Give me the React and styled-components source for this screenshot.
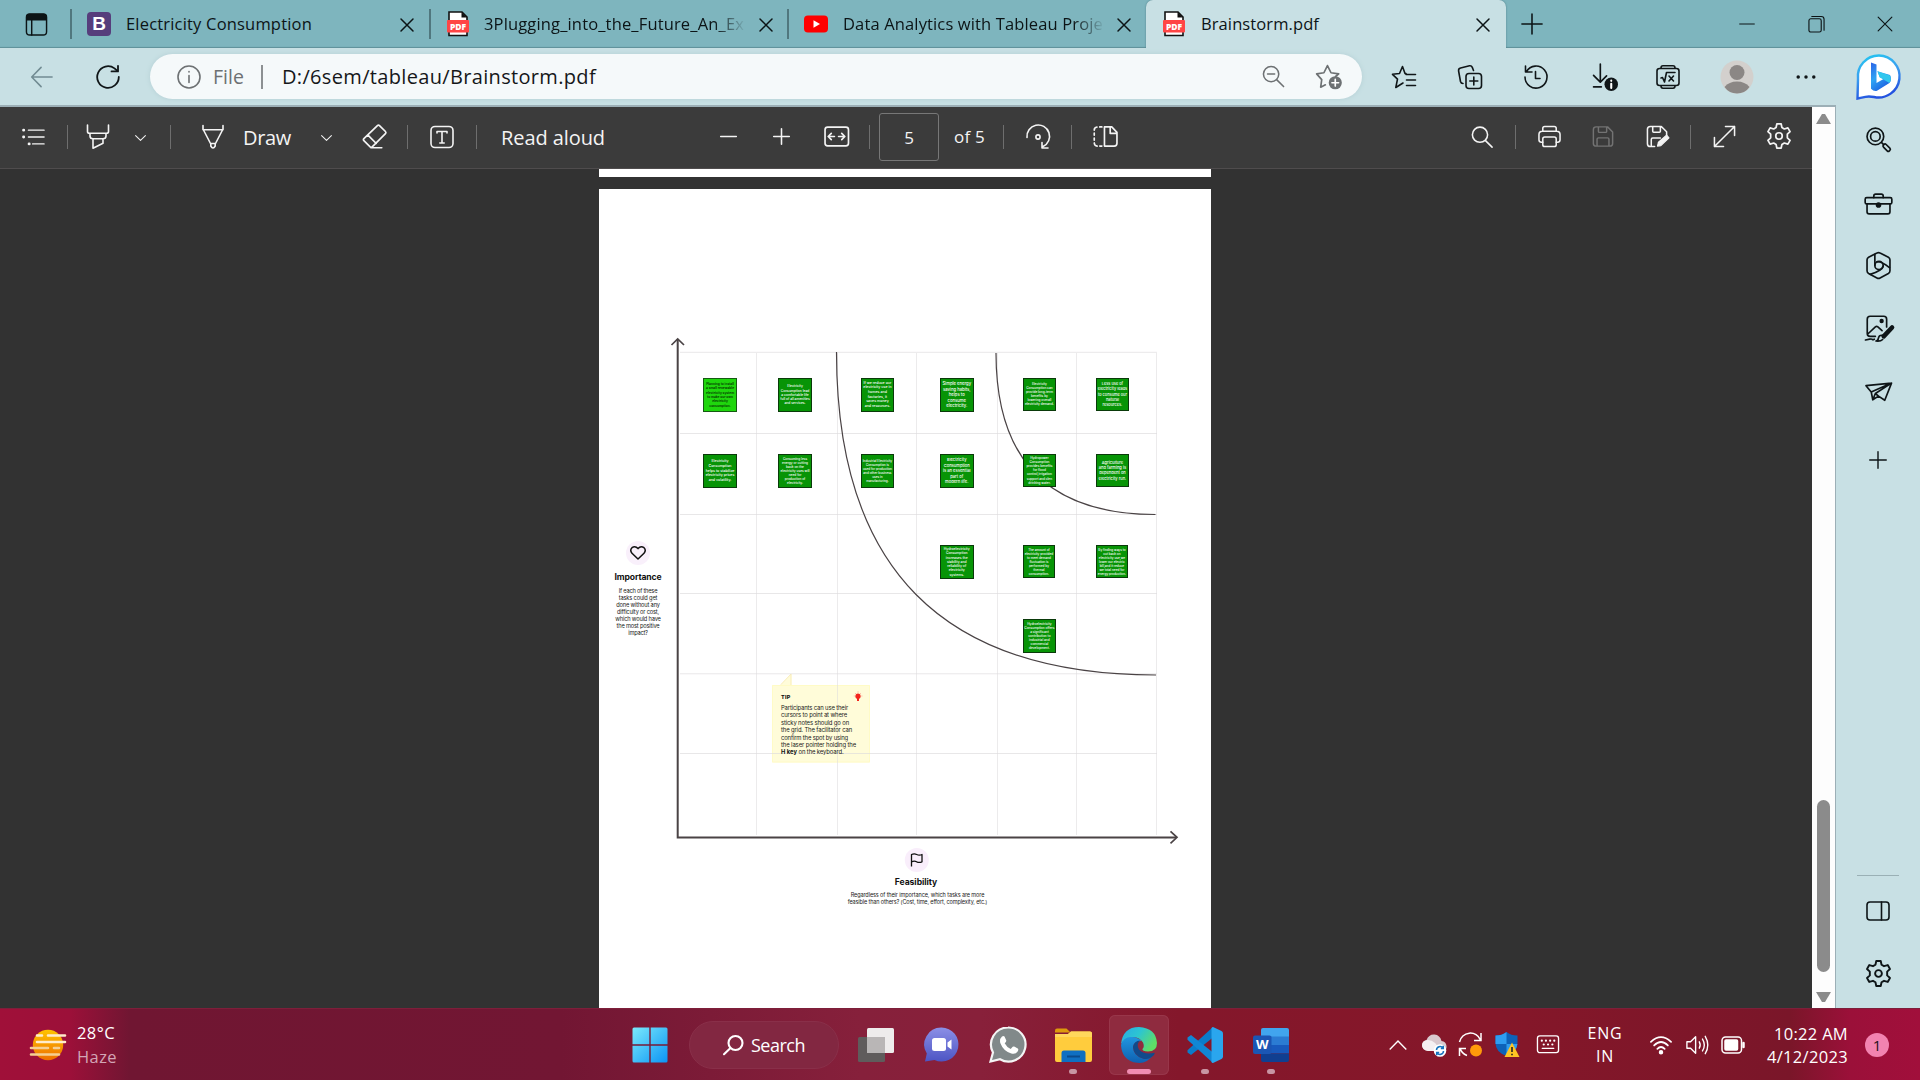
import React, { useLayoutEffect, useRef, useState } from "react";
import styled, { createGlobalStyle } from "styled-components";

const Global = createGlobalStyle`
  * { box-sizing: border-box; }
  body { margin: 0; overflow: hidden; background: #323232; font-family: "Open Sans", "Noto Sans", sans-serif; }
`;

const Screen = styled.div`
  width: 1920px;
  height: 1080px;
  display: flex;
  flex-direction: column;
  overflow: hidden;
`;

/* ---------- shared parts ---------- */
const Svg = styled.svg`
  flex: none;
  display: block;
  width: ${(p) => p.$w}px;
  height: ${(p) => p.$h}px;
  margin-left: ${(p) => p.$ml || 0}px;
  margin-top: ${(p) => p.$mt || 0}px;
  color: ${(p) => p.$c || "inherit"};
  overflow: visible;
`;

function Icon({ name, w = 24, h = 24, ml, mt, c, sw = 1.6, vb = "0 0 24 24" }) {
  return (
    <Svg $w={w} $h={h} $ml={ml} $mt={mt} $c={c} viewBox={vb} fill="none" stroke="currentColor"
      strokeWidth={sw} strokeLinecap="round" strokeLinejoin="round">
      {icons[name]}
    </Svg>
  );
}

const Label = styled.span`
  flex: none;
  display: block;
  width: ${(p) => p.$w}px;
  margin-left: ${(p) => p.$ml || 0}px;
  margin-top: ${(p) => p.$mt || 0}px;
  font-size: ${(p) => p.$size || 16}px;
  line-height: ${(p) => p.$lh || 24}px;
  font-weight: ${(p) => p.$weight || 400};
  color: ${(p) => p.$c || "inherit"};
  white-space: nowrap;
`;

function Text({ children, w, ml, mt, size, lh, c, weight }) {
  const ref = useRef(null);
  const [spacing, setSpacing] = useState(0);
  useLayoutEffect(() => {
    const natural = ref.current.getBoundingClientRect().width;
    setSpacing((w - natural) / String(children).length);
  }, []);
  return (
    <Label $w={w} $ml={ml} $mt={mt} $size={size} $lh={lh} $c={c} $weight={weight}>
      <span ref={ref} style={{ letterSpacing: `${spacing}px` }}>{children}</span>
    </Label>
  );
}

const Rule = styled.i`
  flex: none;
  width: ${(p) => p.$w || 1}px;
  height: ${(p) => p.$h || 24}px;
  margin-left: ${(p) => p.$ml || 0}px;
  background: ${(p) => p.$c || "#6e6e6e"};
`;

const gearPath = "M10 .9h4l.7 3.3 2.2 1.3 3.3-1 2 3.500-2.500 2.300v3.400l2.500 2.300-2 3.500-3.300-1-2.200 1.300-.7 3.300h-4l-.7-3.300-2.200-1.300-3.300 1-2-3.500 2.500-2.300v-3.400L1.800 8l2-3.500 3.300 1 2.200-1.300z";

const icons = {
  tabs: (<><rect x="1.500" y="1" width="21" height="22" rx="3.500" /><path d="M2 7V4q0-2.500 2.500-2.500h15Q22 1.500 22 4v3z" fill="currentColor" /><path d="M7 7v16" /></>),
  close: <path d="M1 1l12 12M13 1L1 13" />,
  plus: <path d="M12 1v22M1 12h22" />,
  minus: <path d="M1 12h22" />,
  restore: (<><rect x="1" y="4" width="13" height="14" rx="2" /><path d="M4 1.500h10q3 0 3 3V16" /></>),
  back: <path d="M23 12H1.500M11 1.500L.8 12 11 22.500" />,
  reload: (<><path d="M22.800 12A10.800 10.800 0 1 1 18.500 3.400L21.500 6" /><path d="M22 .8V6.400h-6.500" /></>),
  info: (<><circle cx="12" cy="12" r="11" /><path d="M12 10.500v7M12 6.500v.4" /></>),
  zoomout: (<><circle cx="9.500" cy="9.500" r="8" /><path d="M15.500 15.500l7 7M5.800 9.500h7.400" /></>),
  starAdd: (<><path d="M9 20l-4.500 2.300 1-7.300L.6 9.500l7-1.100L11 1.500l3.400 6.900 7.400 1.100-3 2.500" /><circle cx="18.500" cy="18" r="6.300" fill="currentColor" stroke="none" /><path d="M18.500 14.800v6.400M15.300 18h6.400" stroke="#fff" /></>),
  favorites: (<><path d="M14 8.500h-1L10.500 1.500 7.500 8.500l-7 .8 5 4.800-1.700 8.400L11 18M14 9.500h9.500M14.500 15h9M14.500 20.500h9" /></>),
  collections: (<><rect x="8" y="8.500" width="15.500" height="15" rx="3" /><path d="M15.800 12v8M11.800 16h8M5 18.500q-2 0-2.500-2L.6 6q-.4-2.400 2-3L11.500.8q2-.3 2.800 1.600L15.500 5.500" /></>),
  history: (<><path d="M2.500 6.500A11 11 0 1 1 1 12M1.500 1v6h6.500M11.500 6.500v7H16" /></>),
  download: (<><path d="M8 0v17M1.500 11L8 17.500l6-6M1.500 22H9" /><circle cx="18.500" cy="19.500" r="6.500" fill="currentColor" stroke="none" /><path d="M18.500 19v4M18.500 16v.2" stroke="#fff" strokeWidth="2" /></>),
  math: (<><rect x="1" y="3.500" width="22" height="17" rx="2.500" /><path d="M5 3Q5 .8 7 .8h10Q19 .8 19 3M5 21q0 2.200 2 2.200h10q2 0 2-2.200M5 13l1.500-.5L8.500 17l2-9.500H19M13 11l4.500 5M17.500 11L13 16" /></>),
  dots: (<g fill="currentColor" stroke="none"><circle cx="3.500" cy="12" r="1.900" /><circle cx="12" cy="12" r="1.900" /><circle cx="20.500" cy="12" r="1.900" /></g>),
  list: (<><path d="M6.500 4.500h17M6.500 12h17M11 19.500h12.500" /><path d="M1.200 4.500h.1M1.200 12h.1M7.200 19.500h.1" strokeWidth="3.200" /></>),
  marker: (<><path d="M1.500 0v6.500q0 1.800 2 1.800h17q2 0 2-1.800V0M4 8.500v2.500q0 2.800 3 2.800h10q3 0 3-2.800V8.500M7 14v9.200l10-5V14" /></>),
  chevron: <path d="M1 1l9 9 9-9" />,
  pen: (<><path d="M2 .5v4.200h20V.5M2.500 5l7 13.500h5L21.500 5M9.800 18.500v2.500q2.200 4 4.400 0v-2.500" /></>),
  eraser: (<><path d="M14.800 1.500q1-1 2 0l5.700 5.700q1 1 0 2L9.800 22q-1 1-2 0l-6-6q-1-1 0-2zM5.500 10.500l8.200 8.200M8.500 22.800H19" /></>),
  textbox: (<><rect x="1" y="1.500" width="22" height="21" rx="4" /><path d="M7 8V6.500h10V8M12 6.500v11.500M9.800 18h4.400" /></>),
  fit: (<><rect x="1" y="3" width="22.500" height="18" rx="2.500" /><path d="M10 12H4.500M7 9l-3 3 3 3M14 12h5.500M17 9l3 3-3 3" /></>),
  rotate: (<><path d="M1 13A11.300 11.300 0 1 1 17 22M22 23.500h-6v-5.500" /><circle cx="12" cy="12.500" r="2.100" /></>),
  pageview: (<><path d="M3.800 2.900Q1.200 3.200 1.200 5.800M6.500 2.800h2M1.200 8.800v2M1.200 13.500v2M1.200 18.200q.2 2.800 2.800 3M6.500 21.200h2" /><path d="M11 2.800h7L23 8v10.500q0 2.700-2.700 2.700H11zM16.500 3.500V9h6" /></>),
  search: (<><circle cx="9.800" cy="9.500" r="8.300" /><path d="M15.800 16l7.200 7" /></>),
  print: (<><path d="M5 6V3.500Q5 1.500 7 1.500h10q2 0 2 2V6M5 18H3.500Q1 18 1 15.500V10q0-3.500 3.500-3.500h15Q23 6.500 23 10v5.500q0 2.500-2.500 2.500H19" /><rect x="5" y="12.500" width="14" height="10" rx="2" /></>),
  save: (<><path d="M4.500 1.500H17L22.500 7v12.500q0 3-3 3h-15q-3 0-3-3v-15q0-3 3-3zM7 1.800v4.700q0 1 1 1h7q1 0 1-1V1.800M5.500 22v-7q0-1.500 1.500-1.500h10q1.500 0 1.500 1.500v7" /></>),
  saveas: (<><path d="M9 22.500H4.500q-3 0-3-3v-15q0-3 3-3H16L21.500 7v4M7 1.800v4.700q0 1 1 1h6q1 0 1-1V1.800M5.500 22v-7q0-1.500 1.500-1.500h8" /><path d="M12 22l1-4 8.500-7.500 2.500 3-8.500 8z" fill="currentColor" strokeWidth="1.200" /></>),
  expand: <path d="M1.500 22.500l21-21M13 1.500h9.500V11M1.500 13v9.500H11" />,
  gear: (<><path d={gearPath} /><circle cx="12" cy="12" r="3" /></>),
  sideSearch: (<><circle cx="9" cy="9" r="8" /><circle cx="9" cy="9" r="4.600" /><path d="M15 15l2 2" /><rect x="-1.800" y="-3.800" width="3.600" height="8" rx="1.500" transform="translate(19.700 19.700) rotate(-45)" /></>),
  toolbox: (<><rect x="-.8" y="4.500" width="25.600" height="6" rx="1.500" /><path d="M1 10.500V18q0 2 2 2h18q2 0 2-2v-7.500M7.500 4.500V2.800Q7.500 1 9.300 1h5.400q1.800 0 1.800 1.800v1.700" /><circle cx="12" cy="11.500" r="1.900" fill="currentColor" /></>),
  hex: (<><path d="M10.500 0q1.500-.8 3 0l8 4q1.500.9 1.500 2.600v10.500q0 1.700-1.500 2.600l-8 4.300q-1.500.8-3 0l-8-4.300Q1 18.800 1 17.100V6.600Q1 4.900 2.500 4z" /><circle cx="12.500" cy="12" r="4" /><path d="M8.500 12V1.200M10.500 8.500q4-.8 12 5.500M16.500 12.500q-1 4.500-12.500 8" /></>),
  image: (<><path d="M9 20.500H4q-2.800 0-2.800-2.800V4Q1.200 1.200 4 1.200h13Q19.800 1.200 19.800 4v7.500M2 18l7-6.500q1.200-1 2.400 0l4 3.500" /><circle cx="15" cy="5.800" r="1.300" fill="currentColor" /><path d="M25 12L17 20.500" strokeWidth="4.400" /><path d="M16 19.500q-3.500-.5-4 2.500-.5 3-2.500 3 4.500.6 6.500-1.500M-.5 24l4-.8q2-.4 2.500.2t2-.2" /></>),
  plane: <path d="M0 4.500L24.500 2 18 18.500l-6-4-5.500 3.500L5 10.500zM5 10.500L24.500 2 9 12l-2.500 6M9 12l3 2.500" />,
  panel: (<><rect x="1" y="3" width="22" height="18" rx="3" /><path d="M15.500 3v18" /></>),
  keyboard: (<><rect x="1" y="3" width="22" height="17.500" rx="2.500" /><path d="M6 16h12" /><path d="M5.500 8h.1M9.800 8h.1M14.200 8h.1M18.500 8h.1M7.500 12h.1M12 12h.1M16.500 12h.1" strokeWidth="2.200" /></>),
  wifi: (<><path d="M1 8.500Q12-1.500 23 8.500M4.500 12.500q7.500-7.500 15 0M8 16.200q4-4 8 0" /><circle cx="12" cy="20" r="1.500" fill="currentColor" /></>),
  volume: (<><path d="M1 8.500h4L10.500 3v18L5 15.500H1zM14.500 8.500q2 3.500 0 7M18 5.500q4 6.500 0 13M21 2.500q5.500 9.500 0 19" /></>),
  battery: (<><rect x="1" y="4" width="19.500" height="16" rx="3.500" /><rect x="4" y="7" width="12.500" height="10" rx="1" fill="currentColor" /><path d="M22.500 10v4" strokeWidth="2.500" /></>),
};

/* ---------- tab strip ---------- */
const TabStrip = styled.header`
  height: 48px;
  flex: none;
  display: flex;
  align-items: center;
  background: #7eb5be;
  box-shadow: inset 0 -2px 1px -1px #5f8f98;
  color: #0c1416;
`;
const TabsMenu = styled.div`
  width: 70px;
  padding-left: 25px;
`;
const Tab = styled.div`
  width: ${(p) => p.$w}px;
  height: 48px;
  flex: none;
  display: flex;
  align-items: center;
  padding-left: ${(p) => (p.$active ? 16 : 15)}px;
  ${(p) => p.$active && "background: #c8e0e4; border-radius: 7px 7px 0 0; box-shadow: 0 0 2px #4c7a84; clip-path: inset(0 -3px 0 -3px);"}
`;
const TabTitle = styled.div`
  width: 262px;
  margin-left: ${(p) => p.$ml}px;
  overflow: hidden;
  ${(p) => p.$fade && "mask-image: linear-gradient(90deg, #000 88%, transparent 100%);"}
`;

const BootstrapMark = styled.div`
  width: 24px;
  height: 24px;
  border-radius: 4px;
  background: #563d7c;
  color: #fff;
  font: 700 19px/24px "Liberation Sans", sans-serif;
  text-align: center;
`;
const PdfMark = () => (
  <Svg $w={24} $h={26} viewBox="0 0 24 26">
    <path d="M3 1h13l5 5v18.500H3z" fill="#fff" stroke="#111" strokeWidth="1.600" />
    <path d="M15.500 1v5.500H21z" fill="#111" />
    <rect x="1" y="9" width="22" height="12.500" rx="1" fill="#ff4545" />
    <text x="12" y="18.500" textAnchor="middle" fontFamily="Open Sans, sans-serif" fontWeight="800" fontSize="8.500" fill="#fff">PDF</text>
  </Svg>
);
const YouTubeMark = () => (
  <Svg $w={24} $h={24} viewBox="0 0 24 24">
    <rect y="3.500" width="24" height="17" rx="4" fill="#f00" />
    <path d="M9.500 8.300v7.400L16 12z" fill="#fff" />
  </Svg>
);

/* ---------- address bar ---------- */
const AddressRow = styled.div`
  height: 57px;
  flex: none;
  display: flex;
  align-items: center;
  background: #c8e0e4;
  color: #101618;
`;
const AddressPill = styled.div`
  width: 1212px;
  height: 45px;
  margin-left: 30px;
  flex: none;
  display: flex;
  align-items: center;
  border-radius: 23px;
  background: #f5f9fa;
  box-shadow: 0 0 5px #b4cfd4;
  color: #6d7173;
`;

const BingMark = () => (
  <Svg $w={45} $h={46} $ml={39} viewBox="0 0 45 46">
    <defs>
      <linearGradient id="bingRing" x1="0" y1="0" x2=".3" y2="1"><stop offset="0" stopColor="#22c8f0" /><stop offset=".5" stopColor="#3b9ff0" /><stop offset="1" stopColor="#2353e0" /></linearGradient>
      <linearGradient id="bingB" x1="0" y1="0" x2=".6" y2="1"><stop offset="0" stopColor="#2b62e6" /><stop offset=".5" stopColor="#2fa4f4" /><stop offset="1" stopColor="#1c5fe0" /></linearGradient>
    </defs>
    <path d="M23 1.500a21 21 0 1 1-5 41.500q-5-1-8.500-.2T1.500 44.500L2 25A21 21 0 0 1 23 1.500z" fill="#fff" stroke="url(#bingRing)" strokeWidth="2.400" />
    <path d="M15 8.500l5.500 2v18.500l7-4-3.800-1.700-2.300-6L34 21q2.200 4.500-.6 8L21 36.700q-3 1-6-2z" fill="url(#bingB)" />
    <path d="M21.500 17.300L34 21.400q2 4.500-.6 7.600l-9.700-5.700z" fill="#30c7ee" />
  </Svg>
);
const Avatar = () => (
  <Svg $w={34} $h={34} $ml={40} viewBox="0 0 34 34">
    <circle cx="17" cy="17" r="16.500" fill="#d3d0cd" />
    <circle cx="17" cy="12.500" r="7.500" fill="#8b8785" />
    <path d="M4.500 27Q9 21.500 17 21.500T29.500 27Q25 33.500 17 33.500T4.500 27z" fill="#8b8785" />
  </Svg>
);

/* ---------- body ---------- */
const Body = styled.div`
  height: 903px;
  flex: none;
  display: flex;
`;
const Viewer = styled.main`
  width: 1836px;
  display: flex;
  border-top: 2px solid #9cafb6;
  border-right: 1px solid #9cafb6;
`;
const Reader = styled.section`
  width: 1812px;
  display: flex;
  flex-direction: column;
`;
const PdfBar = styled.div`
  height: 62px;
  flex: none;
  display: flex;
  align-items: center;
  padding-bottom: 2px;
  background: #3b3b3b;
  border-bottom: 1px solid #4f4c4d;
  color: #f4f4f4;
`;
const PageBox = styled.div`
  width: 60px;
  height: 48px;
  margin-left: 9px;
  flex: none;
  border: 1px solid #777;
  border-radius: 3px;
  text-align: center;
  font-size: 17px;
  line-height: 47px;
`;
const Scroll = styled.div`
  width: 23px;
  display: flex;
  flex-direction: column;
  align-items: center;
  background: #fdfdfd;
`;
const Thumb = styled.div`
  width: 13px;
  height: 172px;
  margin-top: auto;
  margin-bottom: 20px;
  border-radius: 7px;
  background: #8b8b8b;
`;
const ScrollArrow = styled.i`
  width: 15px;
  height: 10px;
  margin: ${(p) => (p.$down ? "0 0 6px" : "7px 0 0")};
  background: #8b8b8b;
  clip-path: ${(p) => (p.$down ? "polygon(0 0,100% 0,60% 100%,40% 100%)" : "polygon(40% 0,60% 0,100% 100%,0 100%)")};
`;
const SidePane = styled.aside`
  width: 84px;
  display: flex;
  flex-direction: column;
  align-items: center;
  background: #c8e0e4;
  color: #0e1517;
`;
const PaneRule = styled.i`
  width: 42px;
  height: 1px;
  margin-top: auto;
  background: #9ab0b5;
`;

/* ---------- document ---------- */
const Canvas = styled.div`
  flex: 1;
  min-height: 0;
  display: flex;
  flex-direction: column;
  padding-left: 599px;
  background: #323232;
  overflow: hidden;
`;
const PreviousPage = styled.div`
  width: 612px;
  height: 8px;
  flex: none;
  background: #fff;
`;
const Page = styled.article`
  position: relative;
  width: 612px;
  height: 819px;
  margin-top: 12px;
  flex: none;
  background: #fff;
  font-family: Inter, "Open Sans", sans-serif;
  color: #202020;
`;
const Board = styled.svg`
  display: block;
  width: 612px;
  height: 819px;
`;
const Note = styled.div`
  position: absolute;
  left: ${(p) => p.$x - 599}px;
  top: ${(p) => p.$y - 189}px;
  width: ${(p) => p.$s || 33.5}px;
  height: ${(p) => p.$s || 33.5}px;
  display: flex;
  flex-direction: column;
  align-items: center;
  justify-content: center;
  border: 1px solid ${(p) => (p.$bright ? "#155a12" : "#0a3a0a")};
  background: ${(p) => (p.$bright ? "#1fd60d" : "#079406")};
  color: ${(p) => (p.$bright ? "#032d01" : "#fff")};
  font-size: ${(p) => p.$f}px;
  line-height: ${(p) => p.$lh}px;
  font-weight: ${(p) => (p.$bright ? 600 : 500)};
  white-space: nowrap;
`;
const Caption = styled.div`
  position: absolute;
  left: ${(p) => p.$x - 599}px;
  top: ${(p) => p.$y - 189}px;
  width: ${(p) => p.$w}px;
  display: flex;
  flex-direction: column;
  align-items: ${(p) => (p.$left ? "flex-start" : "center")};
  white-space: nowrap;
`;

const notes = [
  [703.3, 378.3, 3.25, 4.4, ["Planning to install", "a small renewable", "electricity system", "to make our own", "electricity", "consumption."], true],
  [778.3, 378.3, 3.3, 4.3, ["Electricity", "Consumption lead", "a comfortable life", "full of all amenities", "and services."]],
  [860.7, 378, 3.6, 4.7, ["If we reduce our", "electricity use in", "homes and", "factories, it", "saves money", "and resources."]],
  [940, 378, 4.2, 5.5, ["Simple energy", "saving habits,", "helps to", "consume", "electricity."]],
  [1022.7, 377.5, 3.15, 4.1, ["Electricity", "Consumption can", "provide long-term", "benefits by", "lowering overall", "electricity demand."]],
  [1095.7, 377.5, 3.9, 5.2, ["Less use of", "electricity leads", "to consume our", "natural", "resources."]],
  [703.3, 454.3, 3.6, 4.7, ["Electricity", "Consumption", "helps to stabilize", "electricity prices", "and volatility."]],
  [778.3, 454.3, 3.2, 4.1, ["Consuming less", "energy or cutting", "back on the", "electricity uses will", "need for", "production of", "electricity."]],
  [860.7, 454.3, 3.1, 4.1, ["Industrial Electricity", "Consumption is", "used for production", "and other business", "uses in", "manufacturing."]],
  [940, 454.3, 4.1, 5.5, ["Electricity", "Consumption", "is an essential", "part of", "modern life."]],
  [1022.7, 453.7, 3.15, 4.1, ["Hydropower", "Consumption", "provides benefits", "for flood", "control,irrigation", "support and clen", "drinking water."]],
  [1095.7, 453.7, 4, 5.4, ["Agriculture", "and farming is", "dependent on", "electricity run."]],
  [940, 545.3, 3.4, 4.3, ["Hydroelectricity", "Consumption", "increases the", "stability and", "reliability of", "electricity", "systems."]],
  [1022.7, 545.3, 3.1, 4, ["The amount of", "electricity provided", "to meet demand", "fluctuation is", "performed by", "thermal", "consumption."], false, 32.5],
  [1095.7, 545.3, 3.1, 4, ["By finding ways to", "cut back on", "electricity use,we", "lower our electric", "bill,and it reduce", "we total need for", "energy production."], false, 32.5],
  [1022.7, 619.2, 3.2, 4.1, ["Hydroelectricity", "Consumption offers", "a significant", "contribution to", "industrial and", "commercial", "development."]],
];

const importance = [["If each of these", 38.5], ["tasks could get", 38.5], ["done without any", 43.5], ["difficulty or cost,", 42], ["which would have", 45.5], ["the most positive", 43], ["impact?", 19.5]];
const tip = [["Participants can use their", 67], ["cursors to point at where", 66], ["sticky notes should go on", 68], ["the grid. The facilitator can", 71], ["confirm the spot by using", 67], ["the laser pointer holding the", 75]];
const TipLast = styled.div`
  display: flex;
  gap: 1.500px;
`;

const Whiteboard = () => (
  <Page>
    <Board viewBox="599 189 612 819" fill="none">
      <path d="M772 685h8l11.500-11.500V685H870v77.500h-98z" fill="#fffcd9" />
      <path d="M772.5 685.500h97v76.500h-97z" stroke="#fffbc6" strokeWidth="1" />
      <path d="M791 674v11M781 684.500l10-10.500" stroke="#f6e7ad" strokeWidth=".7" />
      <g stroke="#dcdadc" strokeWidth="1">
        {[352.3, 433.5, 514.5, 593.5, 673.8, 753.5].map((y) => <path key={y} d={`M680 ${y}H1157`} opacity=".65" />)}
        {[756.5, 837.5, 916.5, 997.5, 1076.5, 1156.5].map((x) => <path key={x} d={`M${x} 353V835`} opacity=".55" />)}
      </g>
      <g stroke="#4a4345" strokeWidth="1.200">
        <path d="M836.500 352C836.500 568 942 675 1156 675" />
        <path d="M996 353C996 461 1049 514.500 1155.500 514.500" />
      </g>
      <g stroke="#4a4345" strokeWidth="2">
        <path d="M677.700 339.500V837.500H1176" />
        <path d="M671.500 345l6.200-6 6.300 6M1170.500 831.300l6.500 6-6.500 6" strokeWidth="1.700" />
      </g>
      <circle cx="638" cy="553" r="12" fill="#f9f0fb" />
      <path d="M638 559l-6-5.700q-2.500-3.300 0-5.600 3.200-2.400 6 .9 2.800-3.300 6-.9 2.500 2.300 0 5.600z" stroke="#111" strokeWidth="1.500" strokeLinejoin="round" />
      <circle cx="916.800" cy="860" r="12" fill="#f9eefb" />
      <path d="M911.500 866.500v-12q2.800-1.300 5.200 0 2.500 1.300 5.300 0v7.300q-2.800 1.200-5.300 0-2.400-1.300-5.200 0" stroke="#111" strokeWidth="1.300" strokeLinejoin="round" />
      <circle cx="858" cy="696.200" r="2.600" fill="#f3241c" />
      <path d="M857 698h2v3h-2z" fill="#f3241c" />
      <path d="M858 691.500v1M853.800 696h.8M861.500 696h.8M855 693l.6.6M861 693l-.6.6" stroke="#f58a80" strokeWidth=".8" />
    </Board>
    {notes.map(([x, y, f, lh, lines, bright, s], i) => (
      <Note key={i} $x={x} $y={y} $f={f} $lh={lh} $bright={bright} $s={s}>
        {lines.map((l) => <span key={l}>{l}</span>)}
      </Note>
    ))}
    <Caption $x={608} $y={571.4} $w={60}>
      <Text w={47} size={8.6} lh={12} weight={700} c="#111">Importance</Text>
    </Caption>
    <Caption $x={608} $y={587.4} $w={60}>
      {importance.map(([t, w]) => <Text key={t} w={w} size={5.7} lh={7}>{t}</Text>)}
    </Caption>
    <Caption $x={781} $y={693.5} $w={80} $left>
      <Text w={9.5} size={5.4} lh={7.4} weight={800} c="#111">TIP</Text>
    </Caption>
    <Caption $x={781} $y={704} $w={80} $left>
      {tip.map(([t, w]) => <Text key={t} w={w} size={5.9} lh={7.4}>{t}</Text>)}
      <TipLast>
        <Text w={16} size={5.8} lh={7.4} weight={700} c="#111">H key</Text>
        <Text w={45} size={5.9} lh={7.4}>on the keyboard.</Text>
      </TipLast>
    </Caption>
    <Caption $x={866} $y={876.3} $w={100}>
      <Text w={42.5} size={8.6} lh={12} weight={700} c="#111">Feasibility</Text>
    </Caption>
    <Caption $x={842.5} $y={892.3} $w={150}>
      <Text w={133.500} size={5.5} lh={7}>Regardless of their importance, which tasks are more</Text>
      <Text w={139.500} size={5.5} lh={7}>feasible than others? (Cost, time, effort, complexity, etc.)</Text>
    </Caption>
  </Page>
);

/* ---------- taskbar ---------- */
const Taskbar = styled.footer`
  height: 72px;
  flex: none;
  display: flex;
  align-items: center;
  color: #fff;
  border-top: 1px solid #7d1f3a;
  background: linear-gradient(90deg, #a01039 0, #9c1039 70px, #701632 130px, #721633 560px, #86203b 860px, #88203a 980px, #84172b 1180px, #851729 1500px, #7a1629 1790px, #9b1039 1850px, #a10f3b 1920px);
`;
const Stack = styled.div`
  display: flex;
  flex-direction: column;
  align-items: ${(p) => p.$align || "flex-start"};
  width: ${(p) => p.$w}px;
  margin-left: ${(p) => p.$ml}px;
  flex: none;
`;
const SearchPill = styled.div`
  width: 150px;
  height: 48px;
  margin-left: 21px;
  flex: none;
  display: flex;
  align-items: center;
  border-radius: 24px;
  background: #822741;
  border: 1px solid #892f49;
`;
const AppButton = styled.div`
  width: 60px;
  height: 60px;
  margin-left: ${(p) => p.$ml}px;
  flex: none;
  position: relative;
  display: flex;
  align-items: center;
  justify-content: center;
  border-radius: 6px;
  ${(p) => p.$active && "background: #8f2b3f; box-shadow: inset 0 0 0 1px #98364a;"}
`;
const Running = styled.i`
  position: absolute;
  bottom: 1px;
  left: 50%;
  transform: translateX(-50%);
  width: ${(p) => (p.$active ? 24 : 8)}px;
  height: 5px;
  border-radius: 3px;
  background: ${(p) => (p.$active ? "#f18cb2" : "#c895a3")};
`;
const Badge = styled.div`
  width: 24px;
  height: 24px;
  margin-left: 17px;
  flex: none;
  border-radius: 50%;
  background: #f283b0;
  color: #24101a;
  font-size: 15px;
  line-height: 24px;
  text-align: center;
`;

const Haze = () => (
  <Svg $w={36} $h={32} $ml={30} viewBox="0 0 36 32">
    <defs><linearGradient id="sun" x1="0" y1="0" x2="0" y2="1"><stop offset="0" stopColor="#ffc400" /><stop offset="1" stopColor="#ee6f00" /></linearGradient></defs>
    <circle cx="18" cy="16" r="15.200" fill="url(#sun)" />
    <g strokeWidth="2.600" strokeLinecap="round"><path d="M7 6.500h5M18 6.500h17M7 13h28" stroke="#ffeccb" /><path d="M1 19h17M24 19h5M1 25.500h28" stroke="#f5cf93" /></g>
  </Svg>
);
const WindowsMark = () => (
  <Svg $w={36} $h={36} $ml={515} viewBox="0 0 36 36">
    <defs><linearGradient id="win" gradientUnits="userSpaceOnUse" x1="0" y1="0" x2="36" y2="36"><stop offset="0" stopColor="#7cebfb" /><stop offset="1" stopColor="#0a93f5" /></linearGradient></defs>
    <path d="M2 .5h15.300v16.800H.500V2Q.500.500 2 .500zM18.700.500H34q1.500 0 1.500 1.500v15.300H18.700zM.500 18.700h16.800v16.800H2q-1.500 0-1.500-1.500zM18.700 18.700h16.800V34q0 1.500-1.500 1.500H18.700z" fill="url(#win)" />
  </Svg>
);
const TaskViewMark = () => (
  <Svg $w={36} $h={34} viewBox="0 0 36 34">
    <rect x="0" y="9" width="27" height="25" rx="1.500" fill="#5f5c5c" /><rect x="9" y="0" width="27" height="25" rx="1.500" fill="#eeecec" /><path d="M9 9h18v16H9z" fill="#b9b6b6" />
  </Svg>
);
const ChatMark = () => (
  <Svg $w={35} $h={35} viewBox="0 0 35 35">
    <defs><linearGradient id="chat" x1="0" y1="0" x2="0" y2="1"><stop offset="0" stopColor="#8b8fe6" /><stop offset="1" stopColor="#4d55c4" /></linearGradient></defs>
    <path d="M17.500.500a17 17 0 1 1-7 32.500L1 34.500l1.800-8A17 17 0 0 1 17.500.500z" fill="url(#chat)" />
    <rect x="8" y="11" width="14" height="13" rx="2.500" fill="#fff" /><path d="M23.500 15.500l4-3v10l-4-3z" fill="#fff" />
  </Svg>
);
const WhatsAppMark = () => (
  <Svg $w={37} $h={37} viewBox="0 0 37 37">
    <path d="M19 1.500a17 17 0 1 1-8 31.700L1.500 35.500l2.500-9A17 17 0 0 1 19 1.500z" fill="#81898a" stroke="#f4f4f4" strokeWidth="2.200" />
    <path d="M13 10.500q1.500-1 2.500 0l1.800 4q.2 1-1.600 2.800 2 4 6 5.700l2-2.200q.8-.6 1.500-.2l3.600 1.900q1 .6 0 2.800-2.300 3.500-6.500 2.200-8-2.400-11-10.500-1-4 1.700-6.500z" fill="#fff" />
  </Svg>
);
const FolderMark = () => (
  <Svg $w={37} $h={34} viewBox="0 0 37 34">
    <path d="M0 2.500Q0 .500 2 .500h9.500l4 4H0z" fill="#dd9a0c" /><path d="M0 6h13l3-2.500h19q2 0 2 2V32q0 2-2 2H2q-2 0-2-2z" fill="#ffcc3d" />
    <path d="M0 6h13l3-2.500h19q2 0 2 2V9H0z" fill="#ffd75c" /><path d="M6.500 34V25q0-2.500 2.500-2.500h19q2.500 0 2.500 2.500v9z" fill="#0f6fc2" /><path d="M12 28.500h13" stroke="#0a4a8c" strokeWidth="2" />
  </Svg>
);
const EdgeMark = () => (
  <Svg $w={36} $h={36} viewBox="0 0 36 36">
    <defs>
      <linearGradient id="edgeTop" x1="0" y1="0" x2="1" y2=".5"><stop offset="0" stopColor="#28a9e6" /><stop offset=".5" stopColor="#2cc5d2" /><stop offset="1" stopColor="#5fdd66" /></linearGradient>
      <linearGradient id="edgeLow" x1="0" y1="0" x2="0" y2="1"><stop offset="0" stopColor="#2096e0" /><stop offset="1" stopColor="#0f60b0" /></linearGradient>
    </defs>
    <path d="M0 17Q2 0 18 0q17 1 18 16 0 8.500-9 8.500-6-.2-5.500-2.500 2.300-2.500.5-6.500Q18 9.500 10 10.500 3.500 11.500 0 17z" fill="url(#edgeTop)" />
    <path d="M0 18Q2.500 9.500 11 10q6 .3 9.500 4-7.500-.5-8.500 6 .500 9 10 11.500 5 1 10-3.500-6 9-16 7.800Q1 34 0 18z" fill="url(#edgeLow)" />
    <path d="M12 20q1-6 7-6.500-4 4-1 9 5 5.500 15.500 3.300.8.600-1 2.700-4.500 4.500-10 3.300Q12.500 29 12 20z" fill="#114a8b" />
  </Svg>
);
const CodeMark = () => (
  <Svg $w={36} $h={36} viewBox="0 0 36 36">
    <path d="M26 0v10.500L4 28 .5 25.500v-2.300z" fill="#0b7cc9" /><path d="M26 36V25.500L4 8 .5 10.500v2.300z" fill="#1187d4" /><path d="M26 0l8.500 4q1.500.8 1.500 2.500v23q0 1.700-1.500 2.500L26 36q-1.500 0-1.500-1.500v-33Q24.500 0 26 0z" fill="#2aa6ee" />
  </Svg>
);
const WordMark = () => (
  <Svg $w={36} $h={34} viewBox="0 0 36 34">
    <path d="M8 2q0-2 2-2h24q2 0 2 2v7H8z" fill="#41a5ee" /><path d="M8 8.500h28V17H8z" fill="#2b7cd3" /><path d="M8 17h28v8.500H8z" fill="#185abd" /><path d="M8 25.500h28V32q0 2-2 2H10q-2 0-2-2z" fill="#103f91" />
    <rect y="7.500" width="18.500" height="18.500" rx="2" fill="#1b56b4" />
    <text x="9.200" y="21.300" textAnchor="middle" fontFamily="Open Sans, sans-serif" fontWeight="700" fontSize="13" fill="#fff">W</text>
  </Svg>
);
const CloudMark = () => (
  <Svg $w={25} $h={24} $ml={15} viewBox="0 0 25 24">
    <path d="M6 18q-6-1-6-6 0-4 4.500-5Q7 1 12.500 1.500T19.500 8q4.500.6 5 5t-4 5z" fill="#d9c9ce" /><path d="M5 7q8-1 13 11H6q-6-1-6-6 .5-4 5-5z" fill="#f5f0f2" />
    <circle cx="18" cy="17.500" r="6.300" fill="#fff" /><g stroke="#1673bd" strokeWidth="1.500" fill="none"><path d="M14.500 17a3.600 3.600 0 0 1 6.500-2M21.500 18a3.600 3.600 0 0 1-6.500 2M21.300 12.800v2.600h-2.500M14.700 22.200v-2.600h2.500" /></g>
  </Svg>
);
const SyncMark = () => (
  <Svg $w={25} $h={25} $ml={11} viewBox="0 0 25 25" fill="none" stroke="#fff" strokeWidth="1.500">
    <path d="M1.500 10A11 11 0 0 1 22.500 8M23 1v7.500h-7M2 16q1.500 5.500 7 7.500M1.500 24v-7.500H8" /><circle cx="18" cy="18.500" r="6" fill="#ff9b0a" stroke="none" />
  </Svg>
);
const ShieldMark = () => (
  <Svg $w={25} $h={25} $ml={12} viewBox="0 0 25 25">
    <path d="M11.500 0Q16 3.500 22.500 3.500V11Q22 20 11.500 24 .500 20 .500 11V3.500Q7 3.500 11.500 0z" fill="#0d62b8" /><path d="M11.500 0v12H.5V3.500Q7 3.500 11.500 0zM11.500 12h11q-1 8.500-11 12z" fill="#2e9df0" />
    <path d="M17 10.500L24.500 25H9.500z" fill="#ffc423" /><path d="M17 15v5M17 21.800v1.500" stroke="#222" strokeWidth="1.600" />
  </Svg>
);

const Close = ({ ml = 12 }) => <Icon name="close" w={14} h={14} ml={ml} mt={2} vb="0 0 14 14" sw={1.500} />;

export default function App() {
  return (
    <>
      <Global />
      <Screen>
        <TabStrip>
          <TabsMenu><Icon name="tabs" w={23} h={23} sw={1.500} /></TabsMenu>
          <Rule $w={2} $h={30} $c="#50777e" $mt={2} />
          <Tab $w={357}>
            <BootstrapMark>B</BootstrapMark>
            <TabTitle $ml={15}><Text w={186} size={16.500}>Electricity Consumption</Text></TabTitle>
            <Close />
          </Tab>
          <Rule $w={2} $h={30} $c="#50777e" />
          <Tab $w={356}>
            <PdfMark />
            <TabTitle $ml={14} $fade><Text w={260} size={16.500}>3Plugging_into_the_Future_An_Ex</Text></TabTitle>
            <Close ml={13} />
          </Tab>
          <Rule $w={2} $h={30} $c="#50777e" />
          <Tab $w={357}>
            <YouTubeMark />
            <TabTitle $ml={15} $fade><Text w={260} size={16.500}>Data Analytics with Tableau Proje</Text></TabTitle>
            <Close />
          </Tab>
          <Tab $w={360} $active>
            <PdfMark />
            <TabTitle $ml={15}><Text w={118} size={16.500}>Brainstorm.pdf</Text></TabTitle>
            <Close ml={13} />
          </Tab>
          <Icon name="plus" w={22} h={22} ml={15} sw={1.700} />
          <Icon name="minus" w={16} h={16} ml={196} sw={1.500} />
          <Icon name="restore" w={17} h={18} ml={53} vb="0 0 18 19" sw={1.200} />
          <Icon name="close" w={16} h={16} ml={52} vb="0 0 14 14" sw={1} />
        </TabStrip>

        <AddressRow>
          <Icon name="back" w={24} h={22} ml={30} c="#718b92" sw={1.700} />
          <Icon name="reload" ml={42} sw={1.800} />
          <AddressPill>
            <Icon name="info" ml={27} />
            <Text ml={12} w={31} size={19.500} lh={28}>File</Text>
            <Rule $ml={17} $w={2} $h={24} $c="#8c9092" />
            <Text ml={19} w={314} size={20} lh={28} c="#151719">D:/6sem/tableau/Brainstorm.pdf</Text>
            <Icon name="zoomout" ml={666} w={23} h={23} />
            <Icon name="starAdd" ml={31} w={25} h={25} />
          </AddressPill>
          <Icon name="favorites" ml={30} />
          <Icon name="collections" ml={42} />
          <Icon name="history" ml={42} />
          <Icon name="download" ml={44} w={26} h={26} vb="0 0 25 25" />
          <Icon name="math" ml={38} />
          <Avatar />
          <Icon name="dots" ml={41} w={22} h={22} />
          <BingMark />
        </AddressRow>

        <Body>
          <Viewer>
            <Reader>
              <PdfBar>
                <Icon name="list" ml={21} w={25} h={22} />
                <Rule $ml={21} />
                <Icon name="marker" ml={18} />
                <Icon name="chevron" ml={25} w={11} h={6} mt={2} vb="0 0 20 11" sw={1.900} />
                <Rule $ml={24} />
                <Icon name="pen" ml={30} />
                <Text ml={18} mt={3} w={48} size={20} lh={30}>Draw</Text>
                <Icon name="chevron" ml={30} w={11} h={6} mt={2} vb="0 0 20 11" sw={1.900} />
                <Icon name="eraser" ml={30} w={25} h={25} />
                <Rule $ml={20} />
                <Icon name="textbox" ml={22} />
                <Rule $ml={22} />
                <Text ml={24} mt={3} w={104} size={20} lh={30}>Read aloud</Text>
                <Icon name="minus" ml={115} w={17} h={17} sw={2.200} />
                <Icon name="plus" ml={36} w={17} h={17} sw={2.200} />
                <Icon name="fit" ml={34} w={25} h={25} />
                <Rule $ml={20} />
                <PageBox>5</PageBox>
                <Text ml={15} mt={1} w={31} size={17}>of 5</Text>
                <Rule $ml={18} />
                <Icon name="rotate" ml={22} w={24} h={25} />
                <Rule $ml={21} />
                <Icon name="pageview" ml={21} w={25} h={25} />
                <Icon name="search" ml={353} w={22} h={22} sw={1.700} />
                <Rule $ml={22} />
                <Icon name="print" ml={21} w={25} h={23} />
                <Icon name="save" ml={30} w={22} h={23} c="#737373" />
                <Icon name="saveas" ml={32} w={23} h={23} />
                <Rule $ml={21} />
                <Icon name="expand" ml={22} w={23} h={23} />
                <Icon name="gear" ml={30} w={26} h={26} mt={-2} />
              </PdfBar>
              <Canvas>
                <PreviousPage />
                <Whiteboard />
              </Canvas>
            </Reader>
            <Scroll>
              <ScrollArrow />
              <Thumb />
              <ScrollArrow $down />
            </Scroll>
          </Viewer>
          <SidePane>
            <Icon name="sideSearch" mt={22} w={25} h={25} />
            <Icon name="toolbox" mt={41} w={25} h={25} />
            <Icon name="hex" mt={35} w={25} h={25} />
            <Icon name="image" mt={37} w={25} h={25} />
            <Icon name="plane" mt={41} w={25} h={25} />
            <Icon name="plus" mt={45} w={18} h={18} sw={1.900} />
            <PaneRule />
            <Icon name="panel" mt={23} w={24} h={24} />
            <Icon name="gear" mt={37} w={27} h={27} sw={1.700} />
            <Rule $h={21} $c="transparent" />
          </SidePane>
        </Body>

        <Taskbar>
          <Haze />
          <Stack $ml={11} $w={40}>
            <Text mt={1} w={38} size={16.500} lh={24}>28°C</Text>
            <Text w={40} size={16.500} lh={24} c="#d2a5b5">Haze</Text>
          </Stack>
          <WindowsMark />
          <SearchPill>
            <Svg $w={22} $h={20} $ml={32} viewBox="0 0 22 20" fill="none" stroke="#fff" strokeWidth="2.100"><circle cx="13.500" cy="8" r="7" /><path d="M8.500 13L2 19.200" strokeLinecap="round" /></Svg>
            <Text ml={7} mt={1} w={54} size={18} lh={28}>Search</Text>
          </SearchPill>
          <AppButton $ml={7}><TaskViewMark /></AppButton>
          <AppButton $ml={5}><ChatMark /></AppButton>
          <AppButton $ml={6}><WhatsAppMark /></AppButton>
          <AppButton $ml={6}><FolderMark /><Running /></AppButton>
          <AppButton $ml={6} $active><EdgeMark /><Running $active /></AppButton>
          <AppButton $ml={6}><CodeMark /><Running /></AppButton>
          <AppButton $ml={6}><WordMark /><Running /></AppButton>
          <Svg $w={18} $h={10} $ml={88} viewBox="0 0 18 10" fill="none" stroke="#fff" strokeWidth="1.400"><path d="M.7 9.500L9 1l8.300 8.500" /></Svg>
          <CloudMark />
          <SyncMark />
          <ShieldMark />
          <Icon name="keyboard" ml={16} w={24} h={23} sw={1.400} />
          <Stack $ml={27} $w={36} $align="center">
            <Text mt={1} w={35} size={16} lh={23}>ENG</Text>
            <Text w={18} size={16} lh={23}>IN</Text>
          </Stack>
          <Icon name="wifi" ml={26} w={24} h={22} sw={1.900} />
          <Icon name="volume" ml={12} w={24} h={22} sw={1.500} />
          <Icon name="battery" ml={12} w={24} h={24} sw={1.500} />
          <Stack $ml={21} $w={82} $align="flex-end">
            <Text w={74} size={16.500} lh={23}>10:22 AM</Text>
            <Text w={81} size={16.500} lh={23}>4/12/2023</Text>
          </Stack>
          <Badge>1</Badge>
        </Taskbar>
      </Screen>
    </>
  );
}
